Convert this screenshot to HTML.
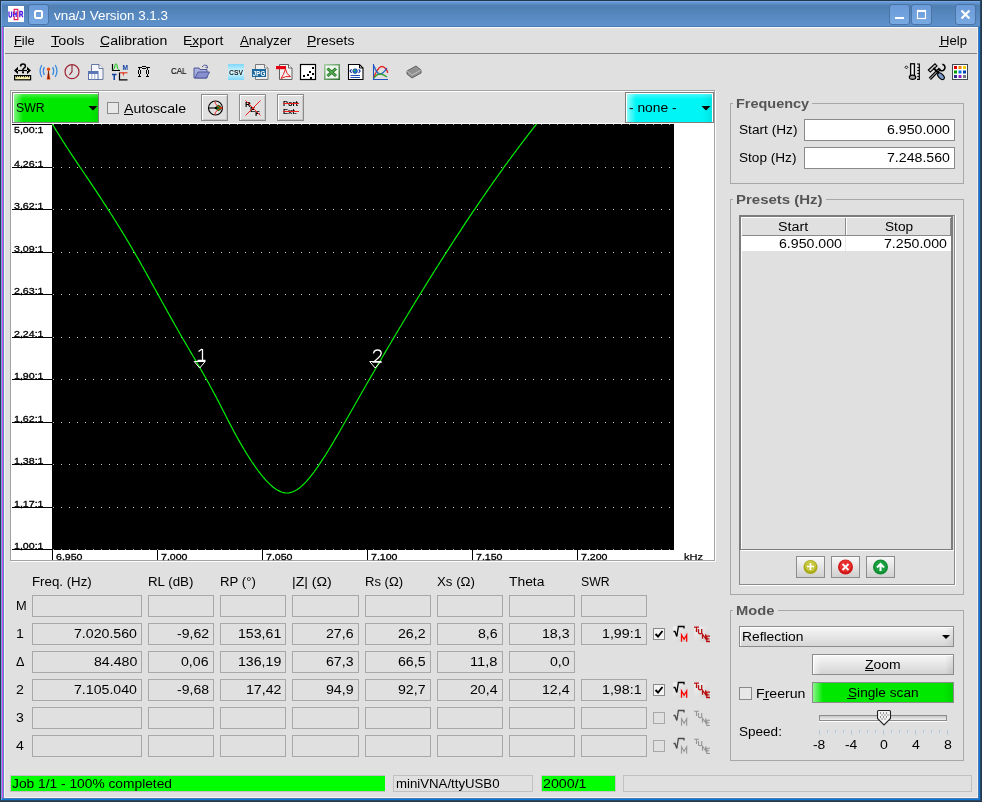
<!DOCTYPE html>
<html><head><meta charset='utf-8'><style>
html,body{margin:0;padding:0}
body{width:982px;height:802px;overflow:hidden;position:relative;background:#e0e0e0;font-family:"Liberation Sans",sans-serif}
.a{position:absolute}
.t{position:absolute;white-space:pre;transform-origin:0 0;will-change:transform}
svg{position:absolute;overflow:visible;will-change:transform}
</style></head><body>
<div class=a style='left:0;top:0;width:982px;height:27px;background:linear-gradient(to bottom,#22384f 0,#22384f 1px,#78a8e4 1px,#78a8e4 2px,#6598d4 2px,#5e8fc8 4px,#5181b4 5px,#5181b4 9px,#5383b8 10px,#5e92cc 26px,#4a78b0 26px,#4a78b0 27px)'></div>
<div class=a style='left:0px;top:0px;width:1px;height:802px;background:#22384f;'></div>
<div class=a style='left:1px;top:1px;width:1px;height:799px;background:#78a8e4;'></div>
<div class=a style='left:977px;top:27px;width:1px;height:10px;background:#8a8a8a;'></div>
<div class=a style='left:2px;top:27px;width:1px;height:771px;background:#d846f0;'></div>
<div class=a style='left:3px;top:27px;width:1px;height:771px;background:#5a8cc8;'></div>
<div class=a style='left:4px;top:27px;width:1px;height:771px;background:#f4f2ee;'></div>
<div class=a style='left:977px;top:27px;width:1px;height:771px;background:#f0eee8;'></div>
<div class=a style='left:978px;top:27px;width:1px;height:772px;background:#4a7ab5;'></div>
<div class=a style='left:979px;top:27px;width:1px;height:773px;background:#0a78d8;'></div>
<div class=a style='left:980px;top:0px;width:2px;height:802px;background:#2a4866;'></div>
<div class=a style='left:981px;top:0px;width:1px;height:802px;background:#22384f;'></div>
<div class=a style='left:4px;top:797px;width:974px;height:1px;background:#f4f2ee;'></div>
<div class=a style='left:2px;top:798px;width:977px;height:1px;background:#4a7ab5;'></div>
<div class=a style='left:2px;top:799px;width:978px;height:1px;background:#0a78d8;'></div>
<div class=a style='left:0px;top:800px;width:982px;height:2px;background:#2a4866;'></div>
<div class=a style='left:0px;top:801px;width:982px;height:1px;background:#22384f;'></div>
<div class=a style='left:8px;top:6px;width:16px;height:16px;background:#ffffff;'></div>
<svg style='left:0;top:0' width='30' height='30'><path d='M9 11.5v4q0 1.6 1.3 1.6t1.3-1.6v-4M13.6 11.5v5.6M16.2 11.5v5.6M13.6 14h2.6M19.8 17.2v-5.7h1.4q1.4 0 1.4 1.5t-1.4 1.5h-1.4M21.5 14.5l1.3 2.7' stroke='#4a1ee0' stroke-width='1.3' fill='none'/><path d='M14.2 14V9.3h3.6v10.4h-3.6v-3.5' stroke='#e8205a' stroke-width='1.2' fill='none'/></svg>
<div class=a style='left:28px;top:4px;width:19px;height:19px;border:1px solid #4a73a6;border-radius:3px;background:linear-gradient(#6a9bd9,#79a9e1)'></div>
<svg style='left:28px;top:4px' width='21' height='21'><path d='M8 7h5l1 1v5l-1 1h-5l-1-1v-5z' fill='none' stroke='#fff' stroke-width='2'/></svg>
<div class=a style='left:889px;top:4px;width:19px;height:19px;border:1px solid #4a73a6;border-radius:3px;background:linear-gradient(#6a9bd9,#79a9e1)'></div>
<div class=a style='left:911px;top:4px;width:19px;height:19px;border:1px solid #4a73a6;border-radius:3px;background:linear-gradient(#6a9bd9,#79a9e1)'></div>
<div class=a style='left:955px;top:4px;width:19px;height:19px;border:1px solid #4a73a6;border-radius:3px;background:linear-gradient(#6a9bd9,#79a9e1)'></div>
<div class=a style='left:895px;top:17px;width:9px;height:2px;background:#ffffff;'></div>
<svg style='left:911px;top:4px' width='21' height='21'><rect x='6.5' y='6.5' width='8' height='8' fill='none' stroke='#fff' stroke-width='1.2'/><rect x='6' y='6' width='9' height='2' fill='#fff'/></svg>
<svg style='left:955px;top:4px' width='21' height='21'><path d='M6.5 6.5L14.5 14.5M14.5 6.5L6.5 14.5' stroke='#fff' stroke-width='2.2'/></svg>
<div class=a style='left:5px;top:27px;width:972px;height:1px;background:#fafafa;'></div>
<div class=a style='left:5px;top:53px;width:972px;height:1px;background:#858585;'></div>
<div class=a style='left:14px;top:46px;width:8px;height:1px;background:#000;'></div>
<div class=a style='left:51px;top:46px;width:8px;height:1px;background:#000;'></div>
<div class=a style='left:100px;top:46px;width:9px;height:1px;background:#000;'></div>
<div class=a style='left:190px;top:46px;width:8px;height:1px;background:#000;'></div>
<div class=a style='left:240px;top:46px;width:9px;height:1px;background:#000;'></div>
<div class=a style='left:307px;top:46px;width:9px;height:1px;background:#000;'></div>
<div class=a style='left:939px;top:46px;width:9px;height:1px;background:#000;'></div>
<div class=a style='left:10px;top:90px;width:705px;height:1px;background:#a3a3a3;'></div>
<div class=a style='left:10px;top:90px;width:1px;height:471px;background:#a3a3a3;'></div>
<div class=a style='left:714px;top:90px;width:1px;height:471px;background:#a3a3a3;'></div>
<div class=a style='left:10px;top:560px;width:705px;height:1px;background:#a3a3a3;'></div>
<div class=a style='left:11px;top:91px;width:703px;height:1px;background:#ffffff;'></div>
<div class=a style='left:11px;top:91px;width:1px;height:33px;background:#ffffff;'></div>
<div class=a style='left:11px;top:561px;width:705px;height:1px;background:#ffffff;'></div>
<div class=a style='left:715px;top:91px;width:1px;height:471px;background:#ffffff;'></div>
<div class=a style='left:12px;top:92px;width:87px;height:31px;background:#7f7f7f;'></div>
<div class=a style='left:13px;top:93px;width:85px;height:29px;background:#ffffff;'></div>
<div class=a style='left:14px;top:94px;width:84px;height:28px;background:linear-gradient(to right,rgba(255,255,255,.5),rgba(255,255,255,0) 9px),linear-gradient(to bottom,rgba(255,255,255,.3),rgba(255,255,255,0) 5px),linear-gradient(to left,rgba(0,0,0,.07),rgba(0,0,0,0) 8px),#00e800'></div>
<svg style='left:88px;top:106px' width='11' height='6'><path d='M0.5 0h9l-4.5 4.5z' fill='#000'/></svg>
<div class=a style='left:107px;top:102px;width:10px;height:10px;border:1px solid #8a8a8a;background:#e8e8e8;'></div>
<div class=a style='left:124px;top:114px;width:9px;height:1px;background:#000;'></div>
<div class=a style='left:201px;top:94px;width:25px;height:25px;border:1px solid #8c8c8c;box-shadow:inset 1px 1px 0 #fff,inset -1px -1px 0 #c8c8c8;background:#e0e0e0'></div>
<div class=a style='left:239px;top:94px;width:25px;height:25px;border:1px solid #8c8c8c;box-shadow:inset 1px 1px 0 #fff,inset -1px -1px 0 #c8c8c8;background:#e0e0e0'></div>
<div class=a style='left:277px;top:94px;width:25px;height:25px;border:1px solid #8c8c8c;box-shadow:inset 1px 1px 0 #fff,inset -1px -1px 0 #c8c8c8;background:#e0e0e0'></div>
<svg style='left:201px;top:94px' width='28' height='28'><path d='M14.5 14Q16.5 7.5 21.5 14Q16.5 20.5 14.5 14z' fill='#107a10'/><circle cx='14.5' cy='14' r='7' fill='none' stroke='#000' stroke-width='1.1'/><path d='M7.5 14h7' stroke='#000' stroke-width='1.1'/><circle cx='15' cy='14' r='1.3' fill='#000'/><path d='M13.8 7.2Q14.5 12.5 21.5 14M13.8 20.8Q14.5 15.5 21.5 14' fill='none' stroke='#f02020' stroke-width='1'/></svg>
<svg style='left:239px;top:94px' width='28' height='28'><text x='6' y='13' font-family='Liberation Sans' font-size='8' font-weight='bold'>R</text><text x='11' y='18' font-family='Liberation Sans' font-size='8' font-weight='bold'>E</text><text x='16' y='22' font-family='Liberation Sans' font-size='8' font-weight='bold'>F</text><path d='M6.5 6.5L21.5 21.5M21.5 6.5L6.5 21.5' stroke='#f02020' stroke-width='1'/></svg>
<svg style='left:277px;top:94px' width='28' height='28'><text x='6' y='12' font-family='Liberation Sans' font-size='7' font-weight='bold' textLength='15' lengthAdjust='spacingAndGlyphs'>Port</text><text x='6' y='20' font-family='Liberation Sans' font-size='7' font-weight='bold' textLength='14' lengthAdjust='spacingAndGlyphs'>Ext.</text><path d='M6 9.5h16M6 17.5h16' stroke='#f02020' stroke-width='1'/></svg>
<div class=a style='left:625px;top:92px;width:89px;height:31px;background:#7f7f7f;'></div>
<div class=a style='left:626px;top:93px;width:87px;height:29px;background:#ffffff;'></div>
<div class=a style='left:627px;top:94px;width:85px;height:28px;background:linear-gradient(to right,rgba(255,255,255,.55),rgba(255,255,255,0) 9px),linear-gradient(to bottom,rgba(255,255,255,.3),rgba(255,255,255,0) 5px),linear-gradient(to left,rgba(0,0,0,.08),rgba(0,0,0,0) 10px),#00f6f6'></div>
<svg style='left:701px;top:106px' width='11' height='6'><path d='M0.5 0h9l-4.5 4.5z' fill='#000'/></svg>
<div class=a style='left:11px;top:123px;width:703px;height:437px;background:#ffffff;'></div>
<div class=a style='left:52px;top:124px;width:622px;height:426px;background:#000000;'></div>
<div class=a style='left:12px;top:124px;width:40px;height:1px;background:#000;'></div>
<div class=a style='left:12px;top:167px;width:40px;height:1px;background:#000;'></div>
<div class=a style='left:12px;top:209px;width:40px;height:1px;background:#000;'></div>
<div class=a style='left:12px;top:252px;width:40px;height:1px;background:#000;'></div>
<div class=a style='left:12px;top:294px;width:40px;height:1px;background:#000;'></div>
<div class=a style='left:12px;top:337px;width:40px;height:1px;background:#000;'></div>
<div class=a style='left:12px;top:379px;width:40px;height:1px;background:#000;'></div>
<div class=a style='left:12px;top:422px;width:40px;height:1px;background:#000;'></div>
<div class=a style='left:12px;top:464px;width:40px;height:1px;background:#000;'></div>
<div class=a style='left:12px;top:507px;width:40px;height:1px;background:#000;'></div>
<div class=a style='left:12px;top:549px;width:40px;height:1px;background:#000;'></div>
<svg style='left:0;top:0' width='982' height='802'><path d='M53 167.5h620 M53 209.5h620 M53 252.5h620 M53 294.5h620 M53 337.5h620 M53 379.5h620 M53 422.5h620 M53 464.5h620 M53 507.5h620' stroke='#c8c8c8' stroke-width='1' stroke-dasharray='1 7'/><path d='M53 124.5h620M53 549.5h620' stroke='#a0a0a0' stroke-width='1' stroke-dasharray='1 7'/></svg>
<div class=a style='left:52px;top:550px;width:1px;height:10px;background:#000;'></div>
<div class=a style='left:157px;top:550px;width:1px;height:10px;background:#000;'></div>
<div class=a style='left:262px;top:550px;width:1px;height:10px;background:#000;'></div>
<div class=a style='left:367px;top:550px;width:1px;height:10px;background:#000;'></div>
<div class=a style='left:472px;top:550px;width:1px;height:10px;background:#000;'></div>
<div class=a style='left:577px;top:550px;width:1px;height:10px;background:#000;'></div>
<svg style='left:0;top:0' width='982' height='802'><clipPath id='pc'><rect x='52' y='124' width='622' height='426'/></clipPath><path d='M52.0 123.5 L53.0 125.1 L54.0 126.8 L55.0 128.4 L56.0 130.1 L57.0 131.7 L58.0 133.3 L59.0 134.9 L60.0 136.5 L61.0 138.1 L62.0 139.7 L63.0 141.3 L64.0 142.8 L65.0 144.4 L66.0 145.9 L67.0 147.5 L68.0 149.0 L69.0 150.5 L70.0 152.1 L71.0 153.6 L72.0 155.1 L73.0 156.6 L74.0 158.1 L75.0 159.6 L76.0 161.1 L77.0 162.6 L78.0 164.1 L79.0 165.6 L80.0 167.1 L81.0 168.5 L82.0 170.0 L83.0 171.5 L84.0 173.0 L85.0 174.5 L86.0 175.9 L87.0 177.4 L88.0 178.9 L89.0 180.4 L90.0 181.9 L91.0 183.4 L92.0 184.9 L93.0 186.4 L94.0 187.9 L95.0 189.4 L96.0 190.9 L97.0 192.4 L98.0 193.9 L99.0 195.4 L100.0 196.9 L101.0 198.5 L102.0 200.0 L103.0 201.5 L104.0 203.1 L105.0 204.6 L106.0 206.1 L107.0 207.7 L108.0 209.3 L109.0 210.8 L110.0 212.4 L111.0 214.0 L112.0 215.5 L113.0 217.1 L114.0 218.7 L115.0 220.3 L116.0 221.9 L117.0 223.5 L118.0 225.1 L119.0 226.7 L120.0 228.3 L121.0 230.0 L122.0 231.6 L123.0 233.2 L124.0 234.9 L125.0 236.5 L126.0 238.2 L127.0 239.9 L128.0 241.5 L129.0 243.2 L130.0 244.9 L131.0 246.6 L132.0 248.3 L133.0 250.0 L134.0 251.7 L135.0 253.4 L136.0 255.2 L137.0 256.9 L138.0 258.6 L139.0 260.4 L140.0 262.1 L141.0 263.9 L142.0 265.7 L143.0 267.4 L144.0 269.2 L145.0 271.0 L146.0 272.8 L147.0 274.6 L148.0 276.4 L149.0 278.2 L150.0 280.0 L151.0 281.8 L152.0 283.6 L153.0 285.4 L154.0 287.2 L155.0 289.0 L156.0 290.8 L157.0 292.6 L158.0 294.4 L159.0 296.2 L160.0 298.0 L161.0 299.8 L162.0 301.7 L163.0 303.5 L164.0 305.3 L165.0 307.1 L166.0 308.9 L167.0 310.7 L168.0 312.5 L169.0 314.3 L170.0 316.1 L171.0 317.9 L172.0 319.6 L173.0 321.4 L174.0 323.2 L175.0 325.0 L176.0 326.7 L177.0 328.5 L178.0 330.3 L179.0 332.0 L180.0 333.8 L181.0 335.5 L182.0 337.2 L183.0 339.0 L184.0 340.7 L185.0 342.4 L186.0 344.1 L187.0 345.8 L188.0 347.5 L189.0 349.2 L190.0 350.9 L191.0 352.6 L192.0 354.3 L193.0 356.0 L194.0 357.7 L195.0 359.4 L196.0 361.1 L197.0 362.8 L198.0 364.5 L199.0 366.2 L200.0 367.9 L201.0 369.7 L202.0 371.4 L203.0 373.2 L204.0 374.9 L205.0 376.7 L206.0 378.5 L207.0 380.2 L208.0 382.0 L209.0 383.8 L210.0 385.7 L211.0 387.5 L212.0 389.3 L213.0 391.2 L214.0 393.1 L215.0 394.9 L216.0 396.8 L217.0 398.7 L218.0 400.6 L219.0 402.6 L220.0 404.5 L221.0 406.5 L222.0 408.4 L223.0 410.4 L224.0 412.3 L225.0 414.3 L226.0 416.3 L227.0 418.2 L228.0 420.2 L229.0 422.1 L230.0 424.0 L231.0 425.9 L232.0 427.8 L233.0 429.7 L234.0 431.6 L235.0 433.4 L236.0 435.3 L237.0 437.1 L238.0 438.9 L239.0 440.6 L240.0 442.4 L241.0 444.1 L242.0 445.9 L243.0 447.6 L244.0 449.3 L245.0 450.9 L246.0 452.6 L247.0 454.2 L248.0 455.8 L249.0 457.4 L250.0 458.9 L251.0 460.5 L252.0 462.0 L253.0 463.4 L254.0 464.9 L255.0 466.3 L256.0 467.8 L257.0 469.1 L258.0 470.5 L259.0 471.8 L260.0 473.1 L261.0 474.4 L262.0 475.6 L263.0 476.9 L264.0 478.0 L265.0 479.2 L266.0 480.3 L267.0 481.4 L268.0 482.4 L269.0 483.4 L270.0 484.4 L271.0 485.3 L272.0 486.1 L273.0 487.0 L274.0 487.8 L275.0 488.5 L276.0 489.2 L277.0 489.8 L278.0 490.4 L279.0 490.9 L280.0 491.4 L281.0 491.8 L282.0 492.2 L283.0 492.5 L284.0 492.7 L285.0 492.9 L286.0 493.0 L287.0 493.0 L288.0 493.0 L289.0 492.9 L290.0 492.7 L291.0 492.4 L292.0 492.1 L293.0 491.8 L294.0 491.3 L295.0 490.8 L296.0 490.3 L297.0 489.7 L298.0 489.0 L299.0 488.3 L300.0 487.5 L301.0 486.6 L302.0 485.8 L303.0 484.8 L304.0 483.9 L305.0 482.8 L306.0 481.8 L307.0 480.7 L308.0 479.5 L309.0 478.4 L310.0 477.2 L311.0 475.9 L312.0 474.6 L313.0 473.3 L314.0 472.0 L315.0 470.6 L316.0 469.2 L317.0 467.8 L318.0 466.4 L319.0 464.9 L320.0 463.4 L321.0 461.9 L322.0 460.4 L323.0 458.9 L324.0 457.3 L325.0 455.8 L326.0 454.2 L327.0 452.6 L328.0 451.0 L329.0 449.3 L330.0 447.7 L331.0 446.1 L332.0 444.4 L333.0 442.7 L334.0 441.0 L335.0 439.3 L336.0 437.6 L337.0 435.9 L338.0 434.2 L339.0 432.5 L340.0 430.8 L341.0 429.0 L342.0 427.3 L343.0 425.5 L344.0 423.8 L345.0 422.0 L346.0 420.3 L347.0 418.5 L348.0 416.8 L349.0 415.0 L350.0 413.2 L351.0 411.5 L352.0 409.7 L353.0 408.0 L354.0 406.2 L355.0 404.5 L356.0 402.7 L357.0 401.0 L358.0 399.2 L359.0 397.5 L360.0 395.7 L361.0 394.0 L362.0 392.2 L363.0 390.5 L364.0 388.8 L365.0 387.0 L366.0 385.3 L367.0 383.5 L368.0 381.8 L369.0 380.1 L370.0 378.4 L371.0 376.6 L372.0 374.9 L373.0 373.2 L374.0 371.5 L375.0 369.7 L376.0 368.0 L377.0 366.3 L378.0 364.6 L379.0 362.9 L380.0 361.2 L381.0 359.5 L382.0 357.7 L383.0 356.0 L384.0 354.3 L385.0 352.6 L386.0 350.9 L387.0 349.2 L388.0 347.5 L389.0 345.8 L390.0 344.2 L391.0 342.5 L392.0 340.8 L393.0 339.1 L394.0 337.4 L395.0 335.7 L396.0 334.0 L397.0 332.4 L398.0 330.7 L399.0 329.0 L400.0 327.3 L401.0 325.7 L402.0 324.0 L403.0 322.3 L404.0 320.7 L405.0 319.0 L406.0 317.3 L407.0 315.7 L408.0 314.0 L409.0 312.4 L410.0 310.7 L411.0 309.1 L412.0 307.4 L413.0 305.8 L414.0 304.2 L415.0 302.5 L416.0 300.9 L417.0 299.2 L418.0 297.6 L419.0 296.0 L420.0 294.3 L421.0 292.7 L422.0 291.1 L423.0 289.5 L424.0 287.9 L425.0 286.2 L426.0 284.6 L427.0 283.0 L428.0 281.4 L429.0 279.8 L430.0 278.2 L431.0 276.6 L432.0 275.0 L433.0 273.4 L434.0 271.8 L435.0 270.2 L436.0 268.6 L437.0 267.0 L438.0 265.5 L439.0 263.9 L440.0 262.3 L441.0 260.7 L442.0 259.1 L443.0 257.6 L444.0 256.0 L445.0 254.4 L446.0 252.9 L447.0 251.3 L448.0 249.8 L449.0 248.2 L450.0 246.6 L451.0 245.1 L452.0 243.6 L453.0 242.0 L454.0 240.5 L455.0 238.9 L456.0 237.4 L457.0 235.9 L458.0 234.3 L459.0 232.8 L460.0 231.3 L461.0 229.8 L462.0 228.2 L463.0 226.7 L464.0 225.2 L465.0 223.7 L466.0 222.2 L467.0 220.7 L468.0 219.2 L469.0 217.7 L470.0 216.2 L471.0 214.7 L472.0 213.2 L473.0 211.7 L474.0 210.2 L475.0 208.8 L476.0 207.3 L477.0 205.8 L478.0 204.3 L479.0 202.9 L480.0 201.4 L481.0 199.9 L482.0 198.5 L483.0 197.0 L484.0 195.6 L485.0 194.1 L486.0 192.7 L487.0 191.2 L488.0 189.8 L489.0 188.4 L490.0 186.9 L491.0 185.5 L492.0 184.1 L493.0 182.6 L494.0 181.2 L495.0 179.8 L496.0 178.4 L497.0 177.0 L498.0 175.6 L499.0 174.2 L500.0 172.8 L501.0 171.4 L502.0 170.0 L503.0 168.6 L504.0 167.2 L505.0 165.8 L506.0 164.4 L507.0 163.1 L508.0 161.7 L509.0 160.3 L510.0 159.0 L511.0 157.6 L512.0 156.2 L513.0 154.9 L514.0 153.5 L515.0 152.2 L516.0 150.8 L517.0 149.5 L518.0 148.2 L519.0 146.8 L520.0 145.5 L521.0 144.2 L522.0 142.8 L523.0 141.5 L524.0 140.2 L525.0 138.9 L526.0 137.6 L527.0 136.3 L528.0 135.0 L529.0 133.7 L530.0 132.4 L531.0 131.1 L532.0 129.8 L533.0 128.5 L534.0 127.2 L535.0 126.0 L536.0 124.7 L537.0 123.4' fill='none' stroke='#00f000' stroke-width='1.2' clip-path='url(#pc)'/></svg>
<div class=a style='left:730px;top:103px;width:234px;height:1px;background:#a8a8a8;'></div>
<div class=a style='left:730px;top:103px;width:1px;height:81px;background:#a8a8a8;'></div>
<div class=a style='left:963px;top:103px;width:1px;height:81px;background:#a8a8a8;'></div>
<div class=a style='left:730px;top:183px;width:234px;height:1px;background:#a8a8a8;'></div>
<div class=a style='left:733px;top:97px;width:79px;height:8px;background:#e0e0e0;'></div>
<div class=a style='left:730px;top:199px;width:234px;height:1px;background:#a8a8a8;'></div>
<div class=a style='left:730px;top:199px;width:1px;height:396px;background:#a8a8a8;'></div>
<div class=a style='left:963px;top:199px;width:1px;height:396px;background:#a8a8a8;'></div>
<div class=a style='left:730px;top:594px;width:234px;height:1px;background:#a8a8a8;'></div>
<div class=a style='left:733px;top:193px;width:93px;height:8px;background:#e0e0e0;'></div>
<div class=a style='left:730px;top:610px;width:234px;height:1px;background:#a8a8a8;'></div>
<div class=a style='left:730px;top:610px;width:1px;height:151px;background:#a8a8a8;'></div>
<div class=a style='left:963px;top:610px;width:1px;height:151px;background:#a8a8a8;'></div>
<div class=a style='left:730px;top:760px;width:234px;height:1px;background:#a8a8a8;'></div>
<div class=a style='left:733px;top:604px;width:45px;height:8px;background:#e0e0e0;'></div>
<div class=a style='left:804px;top:119px;width:151px;height:22px;background:#8a8a8a;'></div>
<div class=a style='left:805px;top:120px;width:149px;height:20px;background:#ffffff;'></div>
<div class=a style='left:804px;top:147px;width:151px;height:22px;background:#8a8a8a;'></div>
<div class=a style='left:805px;top:148px;width:149px;height:20px;background:#ffffff;'></div>
<div class=a style='left:739px;top:215px;width:216px;height:370px;background:#8a8a8a;'></div>
<div class=a style='left:740px;top:216px;width:214px;height:368px;background:#e0e0e0;'></div>
<div class=a style='left:740px;top:585px;width:215px;height:1px;background:#ffffff;'></div>
<div class=a style='left:955px;top:215px;width:1px;height:371px;background:#ffffff;'></div>
<div class=a style='left:739px;top:215px;width:214px;height:2px;background:#7c7c7c;'></div>
<div class=a style='left:739px;top:215px;width:2px;height:335px;background:#7c7c7c;'></div>
<div class=a style='left:951px;top:215px;width:2px;height:335px;background:#7c7c7c;'></div>
<div class=a style='left:739px;top:549px;width:214px;height:1px;background:#7c7c7c;'></div>
<div class=a style='left:741px;top:217px;width:210px;height:1px;background:#ffffff;'></div>
<div class=a style='left:741px;top:217px;width:1px;height:332px;background:#ffffff;'></div>
<div class=a style='left:741px;top:550px;width:213px;height:1px;background:#ffffff;'></div>
<div class=a style='left:742px;top:218px;width:209px;height:17px;background:#e0e0e0;'></div>
<div class=a style='left:742px;top:235px;width:209px;height:1px;background:#8a8a8a;'></div>
<div class=a style='left:845px;top:218px;width:1px;height:33px;background:#8a8a8a;'></div>
<div class=a style='left:846px;top:218px;width:1px;height:17px;background:#ffffff;'></div>
<div class=a style='left:950px;top:218px;width:1px;height:18px;background:#8a8a8a;'></div>
<div class=a style='left:742px;top:236px;width:209px;height:15px;background:#ffffff;'></div>
<div class=a style='left:845px;top:236px;width:1px;height:15px;background:#eaeaea;'></div>
<div class=a style='left:796px;top:556px;width:27px;height:20px;border:1px solid #8c8c8c;background:linear-gradient(#f8f8f8,#d0d0d0)'></div>
<div class=a style='left:831px;top:556px;width:27px;height:20px;border:1px solid #8c8c8c;background:linear-gradient(#f8f8f8,#d0d0d0)'></div>
<div class=a style='left:866px;top:556px;width:27px;height:20px;border:1px solid #8c8c8c;background:linear-gradient(#f8f8f8,#d0d0d0)'></div>
<svg style='left:796px;top:556px' width='29' height='22'><circle cx='14.5' cy='11' r='7' fill='#a8a818'/><circle cx='14.5' cy='10' r='5.5' fill='#c8c840'/><path d='M14.5 7v7M11 10.5h7' stroke='#fff' stroke-width='1.6'/></svg>
<svg style='left:831px;top:556px' width='29' height='22'><circle cx='14.5' cy='11' r='7.5' fill='#d01818'/><circle cx='14.5' cy='10' r='6' fill='#e83030'/><path d='M11.5 8l6 6M17.5 8l-6 6' stroke='#fff' stroke-width='1.8'/></svg>
<svg style='left:866px;top:556px' width='29' height='22'><circle cx='14.5' cy='11' r='7.5' fill='#108a30'/><circle cx='14.5' cy='10.5' r='6' fill='#18a040'/><path d='M14.5 15v-6M11 11.5l3.5-3.5 3.5 3.5' stroke='#fff' stroke-width='2' fill='none'/></svg>
<div class=a style='left:739px;top:626px;width:213px;height:19px;border:1px solid #8c8c8c;box-shadow:inset 1px 1px 0 #fff;background:linear-gradient(to left,rgba(0,0,0,.06),rgba(0,0,0,0) 8px),linear-gradient(#f6f6f6,#d6d6d6)'></div>
<svg style='left:942px;top:635px' width='9' height='5'><path d='M0 0h8l-4 4z' fill='#000'/></svg>
<div class=a style='left:812px;top:654px;width:140px;height:19px;border:1px solid #8c8c8c;box-shadow:inset 1px 1px 0 #fff;background:linear-gradient(to right,rgba(255,255,255,.6),rgba(255,255,255,0) 8px),linear-gradient(to left,rgba(0,0,0,.08),rgba(0,0,0,0) 8px),linear-gradient(#f8f8f8,#d4d4d4)'></div>
<div class=a style='left:865px;top:670px;width:9px;height:1px;background:#000;'></div>
<div class=a style='left:812px;top:682px;width:140px;height:19px;border:1px solid #8c8c8c;background:linear-gradient(to right,rgba(255,255,255,.55),rgba(255,255,255,0) 10px),linear-gradient(to left,rgba(0,0,0,.08),rgba(0,0,0,0) 10px),#00e800'></div>
<div class=a style='left:847px;top:698px;width:9px;height:1px;background:#000;'></div>
<div class=a style='left:739px;top:687px;width:11px;height:11px;border:1px solid #8a8a8a;background:#e8e8e8;'></div>
<div class=a style='left:763px;top:699px;width:6px;height:1px;background:#000;'></div>
<div class=a style='left:819px;top:715px;width:126px;height:4px;border:1px solid #8c8c8c;background:linear-gradient(#c8c8c8,#f0f0f0);box-shadow:0 1px 0 #fff'></div>
<svg style='left:876px;top:709px' width='18' height='18'><path d='M1.5 2.5q0-1 1-1h11q1 0 1 1v7l-6.5 6.5l-6.5-6.5z' fill='#f4f4f4' stroke='#222' stroke-width='1.1'/><path d='M4 4h1M7 4h1M10 4h1M5.5 6h1M8.5 6h1M11.5 6h1M4 8h1M7 8h1M10 8h1M5.5 10h1M8.5 10h1' stroke='#333' stroke-width='1'/></svg>
<svg style='left:0;top:0' width='982' height='802'><path d='M819.5 730v5 M827.5 730v3 M835.5 730v3 M843.5 730v3 M851.5 730v5 M859.5 730v3 M867.5 730v3 M875.5 730v3 M883.5 730v5 M891.5 730v3 M899.5 730v3 M907.5 730v3 M915.5 730v5 M923.5 730v3 M931.5 730v3 M939.5 730v3 M947.5 730v5' stroke='#b4c8e0' stroke-width='1'/></svg>
<div class=a style='left:32px;top:595px;width:110px;height:22px;background:#a8a8a8;'></div>
<div class=a style='left:33px;top:596px;width:108px;height:20px;background:#e0e0e0;'></div>
<div class=a style='left:148px;top:595px;width:66px;height:22px;background:#a8a8a8;'></div>
<div class=a style='left:149px;top:596px;width:64px;height:20px;background:#e0e0e0;'></div>
<div class=a style='left:220px;top:595px;width:66px;height:22px;background:#a8a8a8;'></div>
<div class=a style='left:221px;top:596px;width:64px;height:20px;background:#e0e0e0;'></div>
<div class=a style='left:292px;top:595px;width:67px;height:22px;background:#a8a8a8;'></div>
<div class=a style='left:293px;top:596px;width:65px;height:20px;background:#e0e0e0;'></div>
<div class=a style='left:365px;top:595px;width:66px;height:22px;background:#a8a8a8;'></div>
<div class=a style='left:366px;top:596px;width:64px;height:20px;background:#e0e0e0;'></div>
<div class=a style='left:437px;top:595px;width:66px;height:22px;background:#a8a8a8;'></div>
<div class=a style='left:438px;top:596px;width:64px;height:20px;background:#e0e0e0;'></div>
<div class=a style='left:509px;top:595px;width:66px;height:22px;background:#a8a8a8;'></div>
<div class=a style='left:510px;top:596px;width:64px;height:20px;background:#e0e0e0;'></div>
<div class=a style='left:581px;top:595px;width:66px;height:22px;background:#a8a8a8;'></div>
<div class=a style='left:582px;top:596px;width:64px;height:20px;background:#e0e0e0;'></div>
<div class=a style='left:32px;top:623px;width:110px;height:22px;background:#a8a8a8;'></div>
<div class=a style='left:33px;top:624px;width:108px;height:20px;background:#e0e0e0;'></div>
<div class=a style='left:148px;top:623px;width:66px;height:22px;background:#a8a8a8;'></div>
<div class=a style='left:149px;top:624px;width:64px;height:20px;background:#e0e0e0;'></div>
<div class=a style='left:220px;top:623px;width:66px;height:22px;background:#a8a8a8;'></div>
<div class=a style='left:221px;top:624px;width:64px;height:20px;background:#e0e0e0;'></div>
<div class=a style='left:292px;top:623px;width:67px;height:22px;background:#a8a8a8;'></div>
<div class=a style='left:293px;top:624px;width:65px;height:20px;background:#e0e0e0;'></div>
<div class=a style='left:365px;top:623px;width:66px;height:22px;background:#a8a8a8;'></div>
<div class=a style='left:366px;top:624px;width:64px;height:20px;background:#e0e0e0;'></div>
<div class=a style='left:437px;top:623px;width:66px;height:22px;background:#a8a8a8;'></div>
<div class=a style='left:438px;top:624px;width:64px;height:20px;background:#e0e0e0;'></div>
<div class=a style='left:509px;top:623px;width:66px;height:22px;background:#a8a8a8;'></div>
<div class=a style='left:510px;top:624px;width:64px;height:20px;background:#e0e0e0;'></div>
<div class=a style='left:581px;top:623px;width:66px;height:22px;background:#a8a8a8;'></div>
<div class=a style='left:582px;top:624px;width:64px;height:20px;background:#e0e0e0;'></div>
<div class=a style='left:653px;top:628px;width:10px;height:10px;border:1px solid #8a8a8a;background:#f4f4f4;'></div>
<svg style='left:653px;top:628px' width='12' height='12'><path d='M2.5 6l2.5 2.5l4.5-5.5' stroke='#000' stroke-width='1.9' fill='none'/></svg>
<svg style='left:672px;top:626px' width='18' height='17'><defs><linearGradient id='ig1' x1='0' y1='0' x2='1' y2='1'><stop offset='0' stop-color='#f4f4f4'/><stop offset='1' stop-color='#cfcfcf'/></linearGradient></defs><rect x='1' y='0.5' width='14' height='15.5' fill='url(#ig1)'/><path d='M1.5 5.5h1.5l1.8 5l1.6-10h5.6v2' stroke='#000' stroke-width='1.3' fill='none'/><path d='M9.5 15.8v-7l2.6 4.5l2.6-4.5v7' stroke='#ff0000' stroke-width='1.3' fill='none'/></svg>
<svg style='left:693px;top:626px' width='18' height='17'><rect x='1.5' y='0.5' width='14.5' height='15.5' fill='url(#ig1)'/><path d='M1 1.2h5M3.5 1.2v4.8M5.5 3v3.5q0 1.3 1.6 1.3t1.6-1.3v-3.5M9.5 12.8v-4.6l3.2 4.6v-4.6M17 10.2h-3.2v5.3h3.2M13.8 12.8h2.6' stroke='#b81010' stroke-width='1.3' fill='none'/></svg>
<div class=a style='left:32px;top:651px;width:110px;height:22px;background:#a8a8a8;'></div>
<div class=a style='left:33px;top:652px;width:108px;height:20px;background:#e0e0e0;'></div>
<div class=a style='left:148px;top:651px;width:66px;height:22px;background:#a8a8a8;'></div>
<div class=a style='left:149px;top:652px;width:64px;height:20px;background:#e0e0e0;'></div>
<div class=a style='left:220px;top:651px;width:66px;height:22px;background:#a8a8a8;'></div>
<div class=a style='left:221px;top:652px;width:64px;height:20px;background:#e0e0e0;'></div>
<div class=a style='left:292px;top:651px;width:67px;height:22px;background:#a8a8a8;'></div>
<div class=a style='left:293px;top:652px;width:65px;height:20px;background:#e0e0e0;'></div>
<div class=a style='left:365px;top:651px;width:66px;height:22px;background:#a8a8a8;'></div>
<div class=a style='left:366px;top:652px;width:64px;height:20px;background:#e0e0e0;'></div>
<div class=a style='left:437px;top:651px;width:66px;height:22px;background:#a8a8a8;'></div>
<div class=a style='left:438px;top:652px;width:64px;height:20px;background:#e0e0e0;'></div>
<div class=a style='left:509px;top:651px;width:66px;height:22px;background:#a8a8a8;'></div>
<div class=a style='left:510px;top:652px;width:64px;height:20px;background:#e0e0e0;'></div>
<div class=a style='left:32px;top:679px;width:110px;height:22px;background:#a8a8a8;'></div>
<div class=a style='left:33px;top:680px;width:108px;height:20px;background:#e0e0e0;'></div>
<div class=a style='left:148px;top:679px;width:66px;height:22px;background:#a8a8a8;'></div>
<div class=a style='left:149px;top:680px;width:64px;height:20px;background:#e0e0e0;'></div>
<div class=a style='left:220px;top:679px;width:66px;height:22px;background:#a8a8a8;'></div>
<div class=a style='left:221px;top:680px;width:64px;height:20px;background:#e0e0e0;'></div>
<div class=a style='left:292px;top:679px;width:67px;height:22px;background:#a8a8a8;'></div>
<div class=a style='left:293px;top:680px;width:65px;height:20px;background:#e0e0e0;'></div>
<div class=a style='left:365px;top:679px;width:66px;height:22px;background:#a8a8a8;'></div>
<div class=a style='left:366px;top:680px;width:64px;height:20px;background:#e0e0e0;'></div>
<div class=a style='left:437px;top:679px;width:66px;height:22px;background:#a8a8a8;'></div>
<div class=a style='left:438px;top:680px;width:64px;height:20px;background:#e0e0e0;'></div>
<div class=a style='left:509px;top:679px;width:66px;height:22px;background:#a8a8a8;'></div>
<div class=a style='left:510px;top:680px;width:64px;height:20px;background:#e0e0e0;'></div>
<div class=a style='left:581px;top:679px;width:66px;height:22px;background:#a8a8a8;'></div>
<div class=a style='left:582px;top:680px;width:64px;height:20px;background:#e0e0e0;'></div>
<div class=a style='left:653px;top:684px;width:10px;height:10px;border:1px solid #8a8a8a;background:#f4f4f4;'></div>
<svg style='left:653px;top:684px' width='12' height='12'><path d='M2.5 6l2.5 2.5l4.5-5.5' stroke='#000' stroke-width='1.9' fill='none'/></svg>
<svg style='left:672px;top:682px' width='18' height='17'><defs><linearGradient id='ig3' x1='0' y1='0' x2='1' y2='1'><stop offset='0' stop-color='#f4f4f4'/><stop offset='1' stop-color='#cfcfcf'/></linearGradient></defs><rect x='1' y='0.5' width='14' height='15.5' fill='url(#ig3)'/><path d='M1.5 5.5h1.5l1.8 5l1.6-10h5.6v2' stroke='#000' stroke-width='1.3' fill='none'/><path d='M9.5 15.8v-7l2.6 4.5l2.6-4.5v7' stroke='#ff0000' stroke-width='1.3' fill='none'/></svg>
<svg style='left:693px;top:682px' width='18' height='17'><rect x='1.5' y='0.5' width='14.5' height='15.5' fill='url(#ig3)'/><path d='M1 1.2h5M3.5 1.2v4.8M5.5 3v3.5q0 1.3 1.6 1.3t1.6-1.3v-3.5M9.5 12.8v-4.6l3.2 4.6v-4.6M17 10.2h-3.2v5.3h3.2M13.8 12.8h2.6' stroke='#b81010' stroke-width='1.3' fill='none'/></svg>
<div class=a style='left:32px;top:707px;width:110px;height:22px;background:#a8a8a8;'></div>
<div class=a style='left:33px;top:708px;width:108px;height:20px;background:#e0e0e0;'></div>
<div class=a style='left:148px;top:707px;width:66px;height:22px;background:#a8a8a8;'></div>
<div class=a style='left:149px;top:708px;width:64px;height:20px;background:#e0e0e0;'></div>
<div class=a style='left:220px;top:707px;width:66px;height:22px;background:#a8a8a8;'></div>
<div class=a style='left:221px;top:708px;width:64px;height:20px;background:#e0e0e0;'></div>
<div class=a style='left:292px;top:707px;width:67px;height:22px;background:#a8a8a8;'></div>
<div class=a style='left:293px;top:708px;width:65px;height:20px;background:#e0e0e0;'></div>
<div class=a style='left:365px;top:707px;width:66px;height:22px;background:#a8a8a8;'></div>
<div class=a style='left:366px;top:708px;width:64px;height:20px;background:#e0e0e0;'></div>
<div class=a style='left:437px;top:707px;width:66px;height:22px;background:#a8a8a8;'></div>
<div class=a style='left:438px;top:708px;width:64px;height:20px;background:#e0e0e0;'></div>
<div class=a style='left:509px;top:707px;width:66px;height:22px;background:#a8a8a8;'></div>
<div class=a style='left:510px;top:708px;width:64px;height:20px;background:#e0e0e0;'></div>
<div class=a style='left:581px;top:707px;width:66px;height:22px;background:#a8a8a8;'></div>
<div class=a style='left:582px;top:708px;width:64px;height:20px;background:#e0e0e0;'></div>
<div class=a style='left:653px;top:712px;width:10px;height:10px;border:1px solid #a8a8a8;background:#e0e0e0;'></div>
<svg style='left:672px;top:710px' width='18' height='17'><defs><linearGradient id='ig4' x1='0' y1='0' x2='1' y2='1'><stop offset='0' stop-color='#f4f4f4'/><stop offset='1' stop-color='#cfcfcf'/></linearGradient></defs><path d='M1.5 5.5h1.5l1.8 5l1.6-10h5.6v2' stroke='#4a4a4a' stroke-width='1.3' fill='none'/><path d='M9.5 15.8v-7l2.6 4.5l2.6-4.5v7' stroke='#959595' stroke-width='1.1' fill='none'/></svg>
<svg style='left:693px;top:710px' width='18' height='17'><path d='M1 1.2h5M3.5 1.2v4.8M5.5 3v3.5q0 1.3 1.6 1.3t1.6-1.3v-3.5M9.5 12.8v-4.6l3.2 4.6v-4.6M17 10.2h-3.2v5.3h3.2M13.8 12.8h2.6' stroke='#959595' stroke-width='1.1' fill='none'/></svg>
<div class=a style='left:32px;top:735px;width:110px;height:22px;background:#a8a8a8;'></div>
<div class=a style='left:33px;top:736px;width:108px;height:20px;background:#e0e0e0;'></div>
<div class=a style='left:148px;top:735px;width:66px;height:22px;background:#a8a8a8;'></div>
<div class=a style='left:149px;top:736px;width:64px;height:20px;background:#e0e0e0;'></div>
<div class=a style='left:220px;top:735px;width:66px;height:22px;background:#a8a8a8;'></div>
<div class=a style='left:221px;top:736px;width:64px;height:20px;background:#e0e0e0;'></div>
<div class=a style='left:292px;top:735px;width:67px;height:22px;background:#a8a8a8;'></div>
<div class=a style='left:293px;top:736px;width:65px;height:20px;background:#e0e0e0;'></div>
<div class=a style='left:365px;top:735px;width:66px;height:22px;background:#a8a8a8;'></div>
<div class=a style='left:366px;top:736px;width:64px;height:20px;background:#e0e0e0;'></div>
<div class=a style='left:437px;top:735px;width:66px;height:22px;background:#a8a8a8;'></div>
<div class=a style='left:438px;top:736px;width:64px;height:20px;background:#e0e0e0;'></div>
<div class=a style='left:509px;top:735px;width:66px;height:22px;background:#a8a8a8;'></div>
<div class=a style='left:510px;top:736px;width:64px;height:20px;background:#e0e0e0;'></div>
<div class=a style='left:581px;top:735px;width:66px;height:22px;background:#a8a8a8;'></div>
<div class=a style='left:582px;top:736px;width:64px;height:20px;background:#e0e0e0;'></div>
<div class=a style='left:653px;top:740px;width:10px;height:10px;border:1px solid #a8a8a8;background:#e0e0e0;'></div>
<svg style='left:672px;top:738px' width='18' height='17'><defs><linearGradient id='ig5' x1='0' y1='0' x2='1' y2='1'><stop offset='0' stop-color='#f4f4f4'/><stop offset='1' stop-color='#cfcfcf'/></linearGradient></defs><path d='M1.5 5.5h1.5l1.8 5l1.6-10h5.6v2' stroke='#4a4a4a' stroke-width='1.3' fill='none'/><path d='M9.5 15.8v-7l2.6 4.5l2.6-4.5v7' stroke='#959595' stroke-width='1.1' fill='none'/></svg>
<svg style='left:693px;top:738px' width='18' height='17'><path d='M1 1.2h5M3.5 1.2v4.8M5.5 3v3.5q0 1.3 1.6 1.3t1.6-1.3v-3.5M9.5 12.8v-4.6l3.2 4.6v-4.6M17 10.2h-3.2v5.3h3.2M13.8 12.8h2.6' stroke='#959595' stroke-width='1.1' fill='none'/></svg>
<div class=a style='left:10px;top:775px;width:375px;height:17px;background:#c8c0c8;'></div>
<div class=a style='left:11px;top:776px;width:374px;height:15px;background:#00ff00;'></div>
<div class=a style='left:393px;top:775px;width:138px;height:15px;border:1px solid #c0c0c0;background:transparent;'></div>
<div class=a style='left:541px;top:775px;width:75px;height:17px;background:#c8c8c8;'></div>
<div class=a style='left:542px;top:776px;width:73px;height:15px;background:#00ff00;'></div>
<div class=a style='left:623px;top:775px;width:347px;height:15px;border:1px solid #c0c0c0;background:transparent;'></div>
<svg style='left:14px;top:63px' width='18' height='18' viewBox='0 0 18 18'><rect x='0.6' y='12.6' width='16' height='4.2' fill='#f8f0a8' stroke='#000' stroke-width='1.2'/><path d='M2.5 13v1.3M4.5 13v0.8M6.5 13v1.3M8.5 13v0.8M10.5 13v1.3M12.5 13v0.8M14.5 13v1.3' stroke='#000' stroke-width='0.9'/><path d='M3 7.5h11' stroke='#000' stroke-width='1.2'/><path d='M0 7.5l4-3.8v7.6zM17 7.5l-4-3.8v7.6z' fill='#000'/><path d='M3 7.5h1M13 7.5h1' stroke='#f8f070' stroke-width='1'/><path d='M6.6 3.4q0-2.4 2.4-2.4t2.4 2.2q0 1.3-1.7 2.2q-0.7 0.4-0.7 1.6' stroke='#000' stroke-width='1.6' fill='none'/><rect x='8' y='8.3' width='2' height='2' fill='#000'/></svg>
<svg style='left:40px;top:63px' width='17' height='18' viewBox='0 0 17 18'><path d='M4.3 4q-2 4 0 8M1.8 2q-3.5 6 0 12M12.7 4q2 4 0 8M15.2 2q3.5 6 0 12' stroke='#3a8ae0' stroke-width='1.3' fill='none'/><circle cx='8.5' cy='6.3' r='1.7' fill='#e85010'/><path d='M6.6 16.5l1.9-10l1.9 10z' fill='#d84010'/><path d='M8.5 8v8' stroke='#602008' stroke-width='0.8'/></svg>
<svg style='left:64px;top:63px' width='17' height='18' viewBox='0 0 17 18'><circle cx='8' cy='8.7' r='7' fill='none' stroke='#a02838' stroke-width='1.2'/><path d='M8 2v6.7l-2.6 3.3' stroke='#8a2030' stroke-width='1.1' fill='none'/></svg>
<svg style='left:88px;top:63px' width='17' height='18' viewBox='0 0 17 18'><path d='M3.5 1.5h7.5l4 4v11h-11.5z' fill='#f4f6fc' stroke='#6878a0' stroke-width='1'/><path d='M11 1.5v4h4' fill='#fff' stroke='#6878a0' stroke-width='1'/><rect x='0.5' y='8.5' width='9.5' height='8' fill='#fff' stroke='#5a70a8'/><rect x='0.5' y='8.5' width='9.5' height='2.5' fill='#5a78b8'/><path d='M3.8 11v5.5M6.8 11v5.5' stroke='#98a8c8' stroke-width='1'/></svg>
<svg style='left:111px;top:63px' width='18' height='18' viewBox='0 0 18 18'><path d='M1.5 1v6.5h7.5' stroke='#000' stroke-width='1.2' fill='none'/><path d='M2 6.8l1.6-1.8l0.5-3.5l0.9-0.8l0.9 0.8l0.5 3.5l1.6 1.8' stroke='#10c810' stroke-width='1' fill='none'/><text x='11.5' y='6.5' font-family='Liberation Sans' font-size='7' font-weight='bold' fill='#1040a0' textLength='5.5' lengthAdjust='spacingAndGlyphs'>M</text><path d='M1 11.5h4.5M3.25 11.5v5.5' stroke='#1040a0' stroke-width='1.5'/><path d='M8.5 9.5v7.3h8' stroke='#000' stroke-width='1.2' fill='none'/><path d='M9 9.8h7.5' stroke='#e02000' stroke-width='1'/><path d='M11.6 10l1.5 0l-0.9 3.8z' fill='#e02000'/></svg>
<svg style='left:0;top:0' width='160' height='90' shape-rendering='crispEdges' fill='#000'><rect x='142' y='66' width='4' height='1'/><rect x='142' y='68' width='4' height='1'/><rect x='138' y='67' width='4' height='1'/><rect x='146' y='67' width='4' height='1'/><rect x='139' y='68' width='1' height='2'/><rect x='138' y='70' width='1' height='4'/><rect x='140' y='70' width='1' height='4'/><rect x='139' y='74' width='1' height='2'/><rect x='138' y='76' width='3' height='1'/><rect x='147' y='68' width='1' height='2'/><rect x='146' y='70' width='1' height='4'/><rect x='148' y='70' width='1' height='4'/><rect x='147' y='74' width='1' height='2'/><rect x='146' y='76' width='3' height='1'/></svg>
<svg style='left:193px;top:64px' width='17' height='16' viewBox='0 0 17 16'><path d='M1 4h5l1 1.5h7v8.5h-13z' fill='#a8b0e0' stroke='#505898'/><path d='M2 14l3-6h11.5l-3 6z' fill='#8890d0' stroke='#505898'/><path d='M9 3q2-3 5-1.5M14 1.5l0.5 2.5l-2 -0.5' stroke='#505898' fill='none'/></svg>
<svg style='left:228px;top:64px' width='16' height='16' viewBox='0 0 16 16'><defs><linearGradient id='csvg' x1='0' y1='0' x2='0' y2='1'><stop offset='0' stop-color='#7fd8fa'/><stop offset='0.5' stop-color='#d8f6ff'/><stop offset='1' stop-color='#7fd8fa'/></linearGradient></defs><rect x='0' y='0' width='16' height='16' fill='url(#csvg)'/><text x='1' y='11.3' font-family='Liberation Sans' font-size='7.5' font-weight='bold' fill='#202020' textLength='14' lengthAdjust='spacingAndGlyphs'>CSV</text></svg>
<svg style='left:252px;top:64px' width='17' height='16' viewBox='0 0 17 16'><path d='M3.5 0.5h9l3.5 3.5v11.5h-12.5z' fill='#eeeeee' stroke='#7a7a7a'/><path d='M12.5 0.5v3.5h3.5' fill='#fff' stroke='#7a7a7a'/><rect x='0' y='5' width='14' height='8' fill='#1a6aa0'/><text x='0.8' y='12' font-family='Liberation Sans' font-size='7.5' font-weight='bold' fill='#fff' textLength='12.5' lengthAdjust='spacingAndGlyphs'>JPG</text></svg>
<svg style='left:276px;top:64px' width='17' height='16' viewBox='0 0 17 16'><path d='M3.5 0.5h9l3.5 3.5v11.5h-12.5z' fill='#f2f2f2' stroke='#606060'/><path d='M12.5 0.5v3.5h3.5' fill='#fff' stroke='#606060'/><rect x='0' y='2' width='10' height='3.2' fill='#e80010'/><path d='M5 14.5Q7.5 11 9.5 5Q10 10 14.5 12.5Q9.5 11.8 5 14.5z' fill='none' stroke='#e82020' stroke-width='1'/></svg>
<svg style='left:300px;top:64px' width='16' height='16' viewBox='0 0 16 16'><rect x='0.5' y='0.5' width='15' height='15' fill='#fff' stroke='#000' stroke-width='1.2'/><path d='M12 3h2v2h-2zM9 7h2v2h-2zM12 9h2v2h-2zM3 11h2v2h-2zM7 10h2v2h-2zM10 13h2v2h-2z' fill='#000'/></svg>
<svg style='left:324px;top:64px' width='16' height='16' viewBox='0 0 16 16'><defs><linearGradient id='xlg' x1='0' y1='0' x2='1' y2='1'><stop offset='0' stop-color='#a8d0a8'/><stop offset='1' stop-color='#2a6a2a'/></linearGradient></defs><rect x='0' y='0' width='16' height='16' fill='url(#xlg)'/><rect x='1.5' y='1.5' width='13' height='13' fill='#eef6ee'/><path d='M3.5 4.5l8.5 7.5M12 4.5l-8.5 7.5' stroke='#1e6a1e' stroke-width='3'/><path d='M3.5 4.5l8.5 7.5M12 4.5l-8.5 7.5' stroke='#58b058' stroke-width='1.3'/></svg>
<svg style='left:348px;top:64px' width='16' height='16' viewBox='0 0 16 16'><path d='M0.5 0.5h11l3.5 3.5v11.5h-14.5z' fill='#fff' stroke='#000' stroke-width='1.1'/><path d='M11.5 0.5v3.5h3.5' fill='none' stroke='#000'/><path d='M3.6 5.3l-1.6 1.8l1.6 1.8M10.6 5.3l1.6 1.8l-1.6 1.8' stroke='#1030b0' stroke-width='1.1' fill='none'/><circle cx='7.1' cy='7.1' r='2.4' fill='#1a70c8' stroke='#103070' stroke-width='0.6'/><circle cx='6.6' cy='6.4' r='0.9' fill='#40c040'/><path d='M2.5 11.5h9.5M2.5 13.5h9.5' stroke='#2050b0' stroke-width='1'/></svg>
<svg style='left:373px;top:64px' width='15' height='16' viewBox='0 0 15 16'><path d='M0.5 0v15.5h14.5' stroke='#2050c0' fill='none' stroke-width='1.1'/><path d='M1 13q2-6 5-9t6 0t2.5 5' stroke='#e82020' fill='none' stroke-width='1.3'/><path d='M1 2q3 8 6 8t7-6' stroke='#2060c8' fill='none' stroke-width='1.3'/><path d='M1 14q3-4 6-4t7 3' stroke='#30a030' fill='none' stroke-width='1.3'/></svg>
<svg style='left:406px;top:65px' width='16' height='14' viewBox='0 0 16 14'><path d='M1 6l9-5l5 4v3l-9 5l-5-4z' fill='#909090' stroke='#606060'/><path d='M1 6l5 4l9-5' fill='none' stroke='#c0c0c0'/></svg>
<svg style='left:904px;top:63px' width='17' height='17' viewBox='0 0 17 17'><path d='M2.4 2.8l1.5 1.5l-1.5 1.5l-1.5-1.5z' fill='none' stroke='#000' stroke-width='0.9'/><rect x='6.6' y='0.8' width='3.8' height='12.5' fill='#f4f4f4' stroke='#000' stroke-width='1.3'/><ellipse cx='8.5' cy='14.3' rx='3.2' ry='2.1' fill='#a8a8a8' stroke='#000' stroke-width='1.2'/><path d='M13 1h2.3v15.3h-2.3M13.3 4.5h2M13.3 7.5h2M13.3 10.5h2M13.3 13.5h2' stroke='#000' stroke-width='1.2' fill='none'/></svg>
<svg style='left:928px;top:63px' width='17' height='17' viewBox='0 0 17 17'><path d='M1.8 15.8L12 5.6' stroke='#000' stroke-width='3.2'/><path d='M1.8 15.8L12 5.6' stroke='#d0d0d0' stroke-width='1'/><path d='M14.3 1.2a3.3 3.3 0 1 1 -3.6 4.6' fill='none' stroke='#000' stroke-width='1.6'/><path d='M0.3 7l6.7-6.2l2 2.1l-6.7 6.2z' fill='#c8c8c8' stroke='#000' stroke-width='1.1'/><path d='M5.5 5l5.5 5.5' stroke='#000' stroke-width='1.8'/><ellipse cx='13' cy='13.2' rx='4' ry='2.3' transform='rotate(45 13 13.2)' fill='#7a98c8' stroke='#000' stroke-width='1.1'/></svg>
<svg style='left:952px;top:64px' width='16' height='16' viewBox='0 0 16 16'><rect x='0.5' y='0.5' width='15' height='15' fill='#fff' stroke='#404850'/><rect x='2' y='2' width='3' height='3' fill='#e00000'/><rect x='6.5' y='2' width='3' height='3' fill='#f08000'/><rect x='11' y='2' width='3' height='3' fill='#f0d000'/><rect x='2' y='6.5' width='3' height='3' fill='#00a000'/><rect x='6.5' y='6.5' width='3' height='3' fill='#0070e0'/><rect x='11' y='6.5' width='3' height='3' fill='#0040b0'/><rect x='2' y='11' width='3' height='3' fill='#303090'/><rect x='6.5' y='11' width='3' height='3' fill='#9020c0'/><rect x='11' y='11' width='3' height='3' fill='#707880'/></svg>
<div class=t style='left:54.00px;top:10px;font-size:12px;line-height:12px;color:#ffffff;font-weight:400;transform:scaleX(1.1168);'>vna/J Version 3.1.3</div>
<div class=t style='left:14.00px;top:35px;font-size:12px;line-height:12px;color:#000;font-weight:400;transform:scaleX(1.0699);'>File</div>
<div class=t style='left:51.00px;top:35px;font-size:12px;line-height:12px;color:#000;font-weight:400;transform:scaleX(1.1958);'>Tools</div>
<div class=t style='left:100.00px;top:35px;font-size:12px;line-height:12px;color:#000;font-weight:400;transform:scaleX(1.1722);'>Calibration</div>
<div class=t style='left:183.00px;top:35px;font-size:12px;line-height:12px;color:#000;font-weight:400;transform:scaleX(1.1664);'>Export</div>
<div class=t style='left:240.00px;top:35px;font-size:12px;line-height:12px;color:#000;font-weight:400;transform:scaleX(1.1031);'>Analyzer</div>
<div class=t style='left:307.00px;top:35px;font-size:12px;line-height:12px;color:#000;font-weight:400;transform:scaleX(1.1674);'>Presets</div>
<div class=t style='left:940.00px;top:35px;font-size:12px;line-height:12px;color:#000;font-weight:400;transform:scaleX(1.0937);'>Help</div>
<div class=t style='left:16.00px;top:102px;font-size:12px;line-height:12px;color:#000;font-weight:400;transform:scaleX(1.0237);'>SWR</div>
<div class=t style='left:124.00px;top:103px;font-size:12px;line-height:12px;color:#000;font-weight:400;transform:scaleX(1.1764);'>Autoscale</div>
<div class=t style='left:629.00px;top:102px;font-size:12px;line-height:12px;color:#000;font-weight:400;transform:scaleX(1.1514);'>- none -</div>
<div class=t style='left:14.00px;top:126px;font-size:9px;line-height:9px;color:#000;font-weight:400;transform:scaleX(1.1785);-webkit-text-stroke:0.3px #000'>5,00:1</div>
<div class=t style='left:14.00px;top:160px;font-size:9px;line-height:9px;color:#000;font-weight:400;transform:scaleX(1.1785);-webkit-text-stroke:0.3px #000'>4,26:1</div>
<div class=t style='left:14.00px;top:202px;font-size:9px;line-height:9px;color:#000;font-weight:400;transform:scaleX(1.1785);-webkit-text-stroke:0.3px #000'>3,62:1</div>
<div class=t style='left:14.00px;top:245px;font-size:9px;line-height:9px;color:#000;font-weight:400;transform:scaleX(1.1785);-webkit-text-stroke:0.3px #000'>3,09:1</div>
<div class=t style='left:14.00px;top:287px;font-size:9px;line-height:9px;color:#000;font-weight:400;transform:scaleX(1.1785);-webkit-text-stroke:0.3px #000'>2,63:1</div>
<div class=t style='left:14.00px;top:330px;font-size:9px;line-height:9px;color:#000;font-weight:400;transform:scaleX(1.1785);-webkit-text-stroke:0.3px #000'>2,24:1</div>
<div class=t style='left:14.00px;top:372px;font-size:9px;line-height:9px;color:#000;font-weight:400;transform:scaleX(1.1785);-webkit-text-stroke:0.3px #000'>1,90:1</div>
<div class=t style='left:14.00px;top:415px;font-size:9px;line-height:9px;color:#000;font-weight:400;transform:scaleX(1.1785);-webkit-text-stroke:0.3px #000'>1,62:1</div>
<div class=t style='left:14.00px;top:457px;font-size:9px;line-height:9px;color:#000;font-weight:400;transform:scaleX(1.1785);-webkit-text-stroke:0.3px #000'>1,38:1</div>
<div class=t style='left:14.00px;top:500px;font-size:9px;line-height:9px;color:#000;font-weight:400;transform:scaleX(1.1785);-webkit-text-stroke:0.3px #000'>1,17:1</div>
<div class=t style='left:14.00px;top:542px;font-size:9px;line-height:9px;color:#000;font-weight:400;transform:scaleX(1.1785);-webkit-text-stroke:0.3px #000'>1,00:1</div>
<div class=t style='left:56.00px;top:553px;font-size:9px;line-height:9px;color:#000;font-weight:400;transform:scaleX(1.1761);-webkit-text-stroke:0.3px #000'>6.950</div>
<div class=t style='left:161.00px;top:553px;font-size:9px;line-height:9px;color:#000;font-weight:400;transform:scaleX(1.1761);-webkit-text-stroke:0.3px #000'>7.000</div>
<div class=t style='left:266.00px;top:553px;font-size:9px;line-height:9px;color:#000;font-weight:400;transform:scaleX(1.1761);-webkit-text-stroke:0.3px #000'>7.050</div>
<div class=t style='left:371.00px;top:553px;font-size:9px;line-height:9px;color:#000;font-weight:400;transform:scaleX(1.1761);-webkit-text-stroke:0.3px #000'>7.100</div>
<div class=t style='left:476.00px;top:553px;font-size:9px;line-height:9px;color:#000;font-weight:400;transform:scaleX(1.1761);-webkit-text-stroke:0.3px #000'>7.150</div>
<div class=t style='left:581.00px;top:553px;font-size:9px;line-height:9px;color:#000;font-weight:400;transform:scaleX(1.1761);-webkit-text-stroke:0.3px #000'>7.200</div>
<div class=t style='left:684.00px;top:553px;font-size:9px;line-height:9px;color:#000;font-weight:400;transform:scaleX(1.2258);-webkit-text-stroke:0.2px #000'>kHz</div>
<div class=t style='left:736.00px;top:98px;font-size:12px;line-height:12px;color:#555555;font-weight:700;transform:scaleX(1.2039);'>Frequency</div>
<div class=t style='left:736.00px;top:194px;font-size:12px;line-height:12px;color:#555555;font-weight:700;transform:scaleX(1.2473);'>Presets (Hz)</div>
<div class=t style='left:736.00px;top:605px;font-size:12px;line-height:12px;color:#555555;font-weight:700;transform:scaleX(1.2251);'>Mode</div>
<div class=t style='left:739.00px;top:124px;font-size:12px;line-height:12px;color:#000;font-weight:400;transform:scaleX(1.1394);'>Start (Hz)</div>
<div class=t style='left:739.00px;top:152px;font-size:12px;line-height:12px;color:#000;font-weight:400;transform:scaleX(1.1335);'>Stop (Hz)</div>
<div class=t style='left:887.09px;top:124px;font-size:12px;line-height:12px;color:#000;font-weight:400;transform:scaleX(1.1783);'>6.950.000</div>
<div class=t style='left:887.09px;top:152px;font-size:12px;line-height:12px;color:#000;font-weight:400;transform:scaleX(1.1783);'>7.248.560</div>
<div class=t style='left:777.90px;top:221px;font-size:12px;line-height:12px;color:#000;font-weight:400;transform:scaleX(1.1919);'>Start</div>
<div class=t style='left:884.95px;top:221px;font-size:12px;line-height:12px;color:#000;font-weight:400;transform:scaleX(1.1382);'>Stop</div>
<div class=t style='left:779.09px;top:238px;font-size:12px;line-height:12px;color:#000;font-weight:400;transform:scaleX(1.1783);'>6.950.000</div>
<div class=t style='left:884.09px;top:238px;font-size:12px;line-height:12px;color:#000;font-weight:400;transform:scaleX(1.1783);'>7.250.000</div>
<div class=t style='left:742.00px;top:631px;font-size:12px;line-height:12px;color:#000;font-weight:400;transform:scaleX(1.1524);'>Reflection</div>
<div class=t style='left:865.18px;top:659px;font-size:12px;line-height:12px;color:#000;font-weight:400;transform:scaleX(1.1611);'>Zoom</div>
<div class=t style='left:847.71px;top:687px;font-size:12px;line-height:12px;color:#000;font-weight:400;transform:scaleX(1.1374);'>Single scan</div>
<div class=t style='left:756.00px;top:688px;font-size:12px;line-height:12px;color:#000;font-weight:400;transform:scaleX(1.1777);'>Freerun</div>
<div class=t style='left:813.34px;top:739px;font-size:12px;line-height:12px;color:#000;font-weight:400;transform:scaleX(1.1552);'>-8</div>
<div class=t style='left:845.34px;top:739px;font-size:12px;line-height:12px;color:#000;font-weight:400;transform:scaleX(1.1552);'>-4</div>
<div class=t style='left:879.57px;top:739px;font-size:12px;line-height:12px;color:#000;font-weight:400;transform:scaleX(1.1768);'>0</div>
<div class=t style='left:911.57px;top:739px;font-size:12px;line-height:12px;color:#000;font-weight:400;transform:scaleX(1.1768);'>4</div>
<div class=t style='left:943.57px;top:739px;font-size:12px;line-height:12px;color:#000;font-weight:400;transform:scaleX(1.1768);'>8</div>
<div class=t style='left:739.00px;top:726px;font-size:12px;line-height:12px;color:#000;font-weight:400;transform:scaleX(1.1281);'>Speed:</div>
<div class=t style='left:32.00px;top:576px;font-size:12px;line-height:12px;color:#000;font-weight:400;transform:scaleX(1.1066);'>Freq. (Hz)</div>
<div class=t style='left:148.00px;top:576px;font-size:12px;line-height:12px;color:#000;font-weight:400;transform:scaleX(1.1095);'>RL (dB)</div>
<div class=t style='left:220.00px;top:576px;font-size:12px;line-height:12px;color:#000;font-weight:400;transform:scaleX(1.0992);'>RP (°)</div>
<div class=t style='left:292.00px;top:576px;font-size:12px;line-height:12px;color:#000;font-weight:400;transform:scaleX(1.1754);'>|Z| (Ω)</div>
<div class=t style='left:365.00px;top:576px;font-size:12px;line-height:12px;color:#000;font-weight:400;transform:scaleX(1.0880);'>Rs (Ω)</div>
<div class=t style='left:437.00px;top:576px;font-size:12px;line-height:12px;color:#000;font-weight:400;transform:scaleX(1.1055);'>Xs (Ω)</div>
<div class=t style='left:509.00px;top:576px;font-size:12px;line-height:12px;color:#000;font-weight:400;transform:scaleX(1.1543);'>Theta</div>
<div class=t style='left:581.00px;top:576px;font-size:12px;line-height:12px;color:#000;font-weight:400;transform:scaleX(1.0237);'>SWR</div>
<div class=t style='left:16.00px;top:600px;font-size:12px;line-height:12px;color:#000;font-weight:400;transform:scaleX(1.0670);'>M</div>
<div class=t style='left:16.00px;top:628px;font-size:12px;line-height:12px;color:#000;font-weight:400;transform:scaleX(1.1768);'>1</div>
<div class=t style='left:74.09px;top:628px;font-size:12px;line-height:12px;color:#000;font-weight:400;transform:scaleX(1.1783);'>7.020.560</div>
<div class=t style='left:177.01px;top:628px;font-size:12px;line-height:12px;color:#000;font-weight:400;transform:scaleX(1.1694);'>-9,62</div>
<div class=t style='left:237.74px;top:628px;font-size:12px;line-height:12px;color:#000;font-weight:400;transform:scaleX(1.1786);'>153,61</div>
<div class=t style='left:326.48px;top:628px;font-size:12px;line-height:12px;color:#000;font-weight:400;transform:scaleX(1.1781);'>27,6</div>
<div class=t style='left:398.48px;top:628px;font-size:12px;line-height:12px;color:#000;font-weight:400;transform:scaleX(1.1781);'>26,2</div>
<div class=t style='left:478.33px;top:628px;font-size:12px;line-height:12px;color:#000;font-weight:400;transform:scaleX(1.1785);'>8,6</div>
<div class=t style='left:542.48px;top:628px;font-size:12px;line-height:12px;color:#000;font-weight:400;transform:scaleX(1.1781);'>18,3</div>
<div class=t style='left:602.44px;top:628px;font-size:12px;line-height:12px;color:#000;font-weight:400;transform:scaleX(1.1853);'>1,99:1</div>
<div class=t style='left:16.00px;top:656px;font-size:12px;line-height:12px;color:#000;font-weight:400;transform:scaleX(1.0561);'>Δ</div>
<div class=t style='left:93.74px;top:656px;font-size:12px;line-height:12px;color:#000;font-weight:400;transform:scaleX(1.1786);'>84.480</div>
<div class=t style='left:181.48px;top:656px;font-size:12px;line-height:12px;color:#000;font-weight:400;transform:scaleX(1.1781);'>0,06</div>
<div class=t style='left:237.74px;top:656px;font-size:12px;line-height:12px;color:#000;font-weight:400;transform:scaleX(1.1786);'>136,19</div>
<div class=t style='left:326.48px;top:656px;font-size:12px;line-height:12px;color:#000;font-weight:400;transform:scaleX(1.1781);'>67,3</div>
<div class=t style='left:398.48px;top:656px;font-size:12px;line-height:12px;color:#000;font-weight:400;transform:scaleX(1.1781);'>66,5</div>
<div class=t style='left:470.48px;top:656px;font-size:12px;line-height:12px;color:#000;font-weight:400;transform:scaleX(1.2248);'>11,8</div>
<div class=t style='left:550.33px;top:656px;font-size:12px;line-height:12px;color:#000;font-weight:400;transform:scaleX(1.1785);'>0,0</div>
<div class=t style='left:16.00px;top:684px;font-size:12px;line-height:12px;color:#000;font-weight:400;transform:scaleX(1.1768);'>2</div>
<div class=t style='left:74.09px;top:684px;font-size:12px;line-height:12px;color:#000;font-weight:400;transform:scaleX(1.1783);'>7.105.040</div>
<div class=t style='left:177.01px;top:684px;font-size:12px;line-height:12px;color:#000;font-weight:400;transform:scaleX(1.1694);'>-9,68</div>
<div class=t style='left:245.61px;top:684px;font-size:12px;line-height:12px;color:#000;font-weight:400;transform:scaleX(1.1784);'>17,42</div>
<div class=t style='left:326.48px;top:684px;font-size:12px;line-height:12px;color:#000;font-weight:400;transform:scaleX(1.1781);'>94,9</div>
<div class=t style='left:398.48px;top:684px;font-size:12px;line-height:12px;color:#000;font-weight:400;transform:scaleX(1.1781);'>92,7</div>
<div class=t style='left:470.48px;top:684px;font-size:12px;line-height:12px;color:#000;font-weight:400;transform:scaleX(1.1781);'>20,4</div>
<div class=t style='left:542.48px;top:684px;font-size:12px;line-height:12px;color:#000;font-weight:400;transform:scaleX(1.1781);'>12,4</div>
<div class=t style='left:602.44px;top:684px;font-size:12px;line-height:12px;color:#000;font-weight:400;transform:scaleX(1.1853);'>1,98:1</div>
<div class=t style='left:16.00px;top:712px;font-size:12px;line-height:12px;color:#000;font-weight:400;transform:scaleX(1.1768);'>3</div>
<div class=t style='left:16.00px;top:740px;font-size:12px;line-height:12px;color:#000;font-weight:400;transform:scaleX(1.1768);'>4</div>
<div class=t style='left:12.00px;top:778px;font-size:12px;line-height:12px;color:#000;font-weight:400;transform:scaleX(1.1476);'>Job 1/1 - 100% completed</div>
<div class=t style='left:395.50px;top:778px;font-size:12px;line-height:12px;color:#000;font-weight:400;transform:scaleX(1.1007);'>miniVNA/ttyUSB0</div>
<div class=t style='left:543.00px;top:778px;font-size:12px;line-height:12px;color:#000;font-weight:400;transform:scaleX(1.1848);'>2000/1</div>
<div class=t style='left:171.00px;top:67px;font-size:9px;line-height:9px;color:#000;font-weight:400;transform:scaleX(0.8849);-webkit-text-stroke:0.15px #000'>CAL</div>
<svg style='left:0;top:0' width='982' height='802'><path d='M194.2 361.5h11l-5.5 6.5z' fill='none' stroke='#fff' stroke-width='1'/></svg>
<svg style='left:0;top:0' width='982' height='802'><path d='M369.7 361.5h11l-5.5 6.5z' fill='none' stroke='#fff' stroke-width='1'/></svg>
<svg style='left:0;top:0' width='982' height='802'><path d='M202.5 349v11.5M198.5 351.5l3.5 -2.5M197.5 360.5h8' stroke='#fff' stroke-width='1.3' fill='none'/><path d='M373.5 353.5q0.5-3.5 4-3.5q3.7 0 3.7 3.3q0 2-3 4.7l-4.5 4h8' stroke='#fff' stroke-width='1.3' fill='none'/></svg>
</body></html>
